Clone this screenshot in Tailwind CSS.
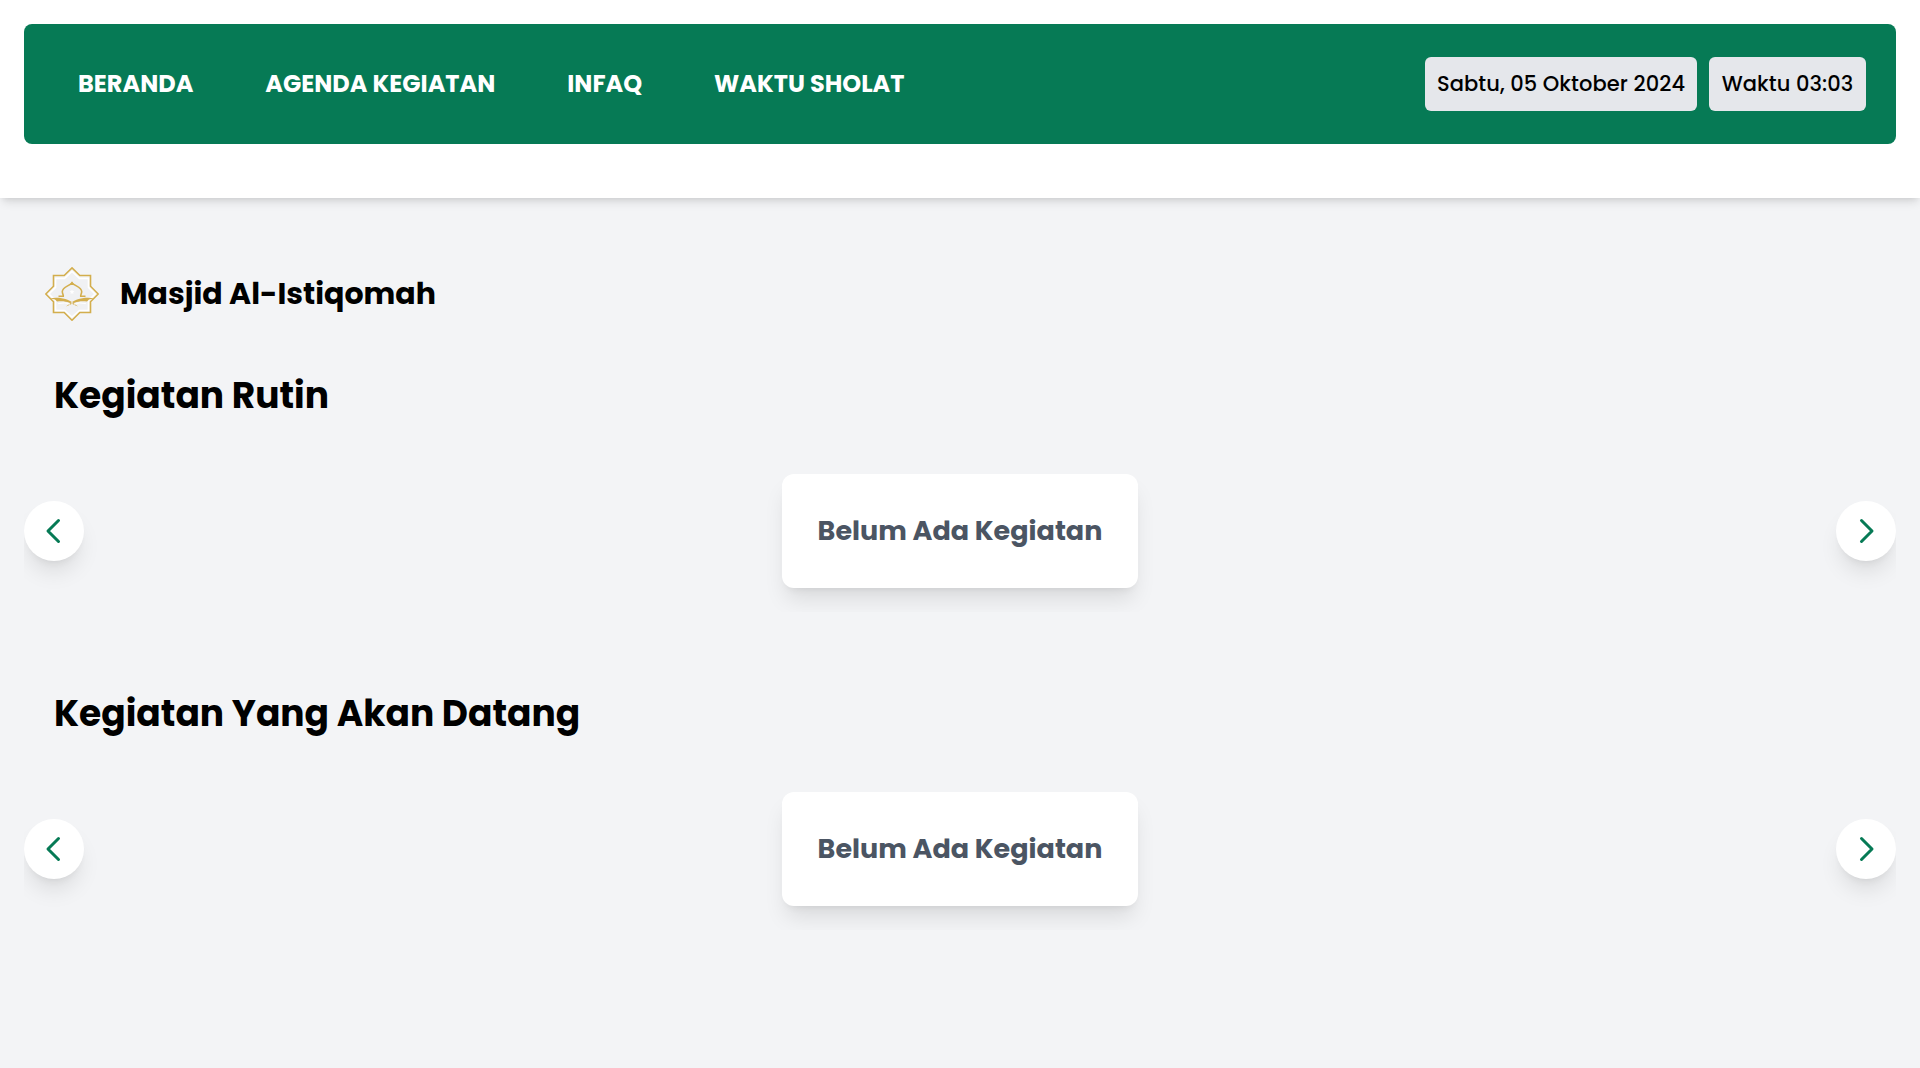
<!DOCTYPE html>
<html lang="id">
<head>
<meta charset="utf-8">
<title>Masjid Al-Istiqomah</title>
<script src="https://cdn.jsdelivr.net/npm/@tailwindcss/browser@4"></script>
</head>
<body class="min-h-screen overflow-hidden bg-[#f3f4f6] font-['Poppins','Inter',sans-serif] text-black">
<header class="h-[198px] bg-white p-6 shadow-[0_6px_9px_-1.5px_rgba(0,0,0,0.1),0_3px_6px_-3px_rgba(0,0,0,0.1)]">
  <div class="flex h-[120px] items-center justify-between rounded-lg bg-[#067a55] pr-[30px] pl-[54px]">
    <nav class="flex gap-[72px] text-2xl font-bold whitespace-nowrap text-white">
      <a>BERANDA</a>
      <a>AGENDA KEGIATAN</a>
      <a>INFAQ</a>
      <a>WAKTU SHOLAT</a>
    </nav>
    <div class="flex gap-3 text-[21px] font-medium tracking-[0.08px] whitespace-nowrap">
      <div class="flex h-[54px] w-[272px] items-center justify-center rounded-md bg-gray-200">Sabtu, 05 Oktober 2024</div>
      <div class="flex h-[54px] w-[157px] items-center justify-center rounded-md bg-gray-200">Waktu 03:03</div>
    </div>
  </div>
</header>
<main class="px-6 pt-[69px]">
  <div class="flex h-[54px] items-center gap-[21px] pl-[21px]">
    <svg class="size-[54px]" viewBox="0 0 54 54" fill="none">
      <path d="M27 4.500 34.500 11.500H43.500V20.500L50 27 43.500 33.500V43.500H34.500L27 50 19.500 43.500H10.500V33.500L4 27 10.500 20.500V11.500H19.500Z" stroke="#fff" stroke-width="1.600" fill="#f0f1f3"/>
      <path d="M27 .9 34.800 8.500H45.500V19.200L53.200 27 45.500 34.800V45.500H34.800L27 53.200 19.200 45.500H8.500V34.800L.8 27 8.500 19.200V8.500H19.200Z" stroke="#d3ae4d" stroke-width="1.600"/>
      <path d="M13.500 29.300H18.300C18.600 28 17.300 26.800 17.300 24.500 17.600 20 23.500 19.300 27 16 30.500 19.300 36.400 20 36.700 24.500 36.700 26.800 35.400 28 35.700 29.300H40.500" stroke="#d3ae4d" stroke-width="1.600"/>
      <path d="M27 14.300 29.500 18H24.500Z" fill="#d3ae4d"/>
      <path d="M27 22.500l.7 1.600 1.700.2-1.300 1.100.4 1.700-1.500-.9-1.500.9.400-1.700-1.300-1.100 1.700-.2Z" fill="#fff"/>
      <path d="M4.500 31.200C14 30 23 30.500 33 39.500 25 35.500 20 33.200 12 34.500L10 32.500ZM49.500 31.200C40 30 31 30.500 21 39.500 29 35.500 34 33.200 42 34.500L44 32.500Z" fill="#d3ae4d"/>
      <path d="M13 36.700Q20 34.800 25 37.200M41 36.700Q34 34.800 29 37.200" stroke="#fff" stroke-width="1"/>
    </svg>
    <h1 class="text-3xl font-bold">Masjid Al-Istiqomah</h1>
  </div>
  <section class="mt-12">
    <h2 class="flex h-[54px] items-center pl-[30px] text-4xl font-bold">Kegiatan Rutin</h2>
    <div class="mt-[27px] flex h-[162px] items-center justify-between overflow-hidden">
      <button class="flex size-[60px] items-center justify-center rounded-full bg-white shadow-[0_15px_22.5px_-4.5px_rgba(0,0,0,0.1),0_6px_9px_-6px_rgba(0,0,0,0.1)]">
        <svg class="size-9" viewBox="0 0 24 24" fill="none" stroke="#067a55" stroke-width="2" stroke-linecap="round" stroke-linejoin="round"><path d="m15 19-7-7 7-7"/></svg>
      </button>
      <div class="flex h-[114px] w-[356px] items-center justify-center rounded-xl bg-white text-[27px] font-bold whitespace-nowrap text-[#4b5563] shadow-[0_15px_22.5px_-4.5px_rgba(0,0,0,0.1),0_6px_9px_-6px_rgba(0,0,0,0.1)]">Belum Ada Kegiatan</div>
      <button class="flex size-[60px] items-center justify-center rounded-full bg-white shadow-[0_15px_22.5px_-4.5px_rgba(0,0,0,0.1),0_6px_9px_-6px_rgba(0,0,0,0.1)]">
        <svg class="size-9" viewBox="0 0 24 24" fill="none" stroke="#067a55" stroke-width="2" stroke-linecap="round" stroke-linejoin="round"><path d="m9 5 7 7-7 7"/></svg>
      </button>
    </div>
  </section>
  <section class="mt-[75px]">
    <h2 class="flex h-[54px] items-center pl-[30px] text-4xl font-bold">Kegiatan Yang Akan Datang</h2>
    <div class="mt-[27px] flex h-[162px] items-center justify-between overflow-hidden">
      <button class="flex size-[60px] items-center justify-center rounded-full bg-white shadow-[0_15px_22.5px_-4.5px_rgba(0,0,0,0.1),0_6px_9px_-6px_rgba(0,0,0,0.1)]">
        <svg class="size-9" viewBox="0 0 24 24" fill="none" stroke="#067a55" stroke-width="2" stroke-linecap="round" stroke-linejoin="round"><path d="m15 19-7-7 7-7"/></svg>
      </button>
      <div class="flex h-[114px] w-[356px] items-center justify-center rounded-xl bg-white text-[27px] font-bold whitespace-nowrap text-[#4b5563] shadow-[0_15px_22.5px_-4.5px_rgba(0,0,0,0.1),0_6px_9px_-6px_rgba(0,0,0,0.1)]">Belum Ada Kegiatan</div>
      <button class="flex size-[60px] items-center justify-center rounded-full bg-white shadow-[0_15px_22.5px_-4.5px_rgba(0,0,0,0.1),0_6px_9px_-6px_rgba(0,0,0,0.1)]">
        <svg class="size-9" viewBox="0 0 24 24" fill="none" stroke="#067a55" stroke-width="2" stroke-linecap="round" stroke-linejoin="round"><path d="m9 5 7 7-7 7"/></svg>
      </button>
    </div>
  </section>
</main>
</body>
</html>
